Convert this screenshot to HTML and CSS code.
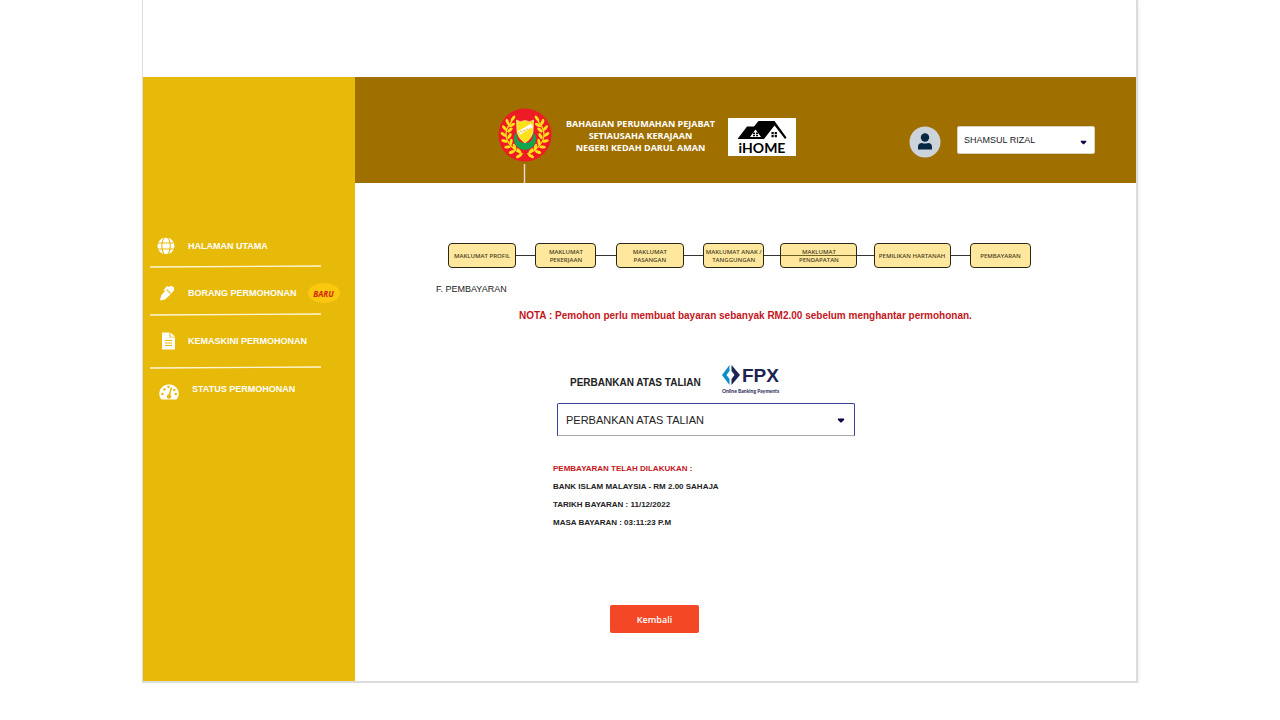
FILE: index.html
```html
<!DOCTYPE html>
<html lang="ms">
<head>
<meta charset="utf-8">
<meta name="viewport" content="width=device-width, initial-scale=1">
<title>iHOME - Pembayaran</title>
<link rel="stylesheet" href="styles.css">
</head>
<body>
<div class="page">
  <aside class="sidebar">
    <nav class="menu">
      <a class="menu-item" href="#">
        <svg class="menu-icon" viewBox="0 0 22 22" aria-hidden="true"><circle cx="11" cy="11" r="8.500" fill="#fff"/><g fill="none" stroke="#e7b909" stroke-width="1.100"><ellipse cx="11" cy="11" rx="4.200" ry="9"/><path d="M2 8h18M2 14h18"/></g></svg>
        <span>HALAMAN UTAMA</span>
      </a>
      <svg class="rule rule-first" viewBox="0 0 171 5" preserveAspectRatio="none" aria-hidden="true"><path d="M0 3L171 2"/></svg>
      <a class="menu-item" href="#">
        <svg class="menu-icon" viewBox="0 0 22 22" aria-hidden="true"><g fill="#fff"><path d="M5 18.500L6.300 13L11.500 7.500L16 12L10 17.400Z"/><path d="M8.500 8L11.500 4.500Q13 4 14 5L15.500 4Q17.500 3.500 19 5.500Q19.500 7.500 18.500 9L16.500 11.500L12.200 7.200L10 9Z"/></g><path d="M11.500 8L15.500 12" stroke="#e7b909" stroke-width=".8"/></svg>
        <span>BORANG PERMOHONAN</span>
        <em class="badge">BARU</em>
      </a>
      <svg class="rule" viewBox="0 0 171 5" preserveAspectRatio="none" aria-hidden="true"><path d="M0 3L171 2"/></svg>
      <a class="menu-item" href="#">
        <svg class="menu-icon" viewBox="0 0 22 22" aria-hidden="true"><path d="M7 2.500H14.500V7.500H20V19.500H7ZM15.500 2.500L20 6.700H15.500Z" fill="#fff"/><path d="M10 10.500H17M10 13H17M10 15.500H17" stroke="#e7b909"/></svg>
        <span>KEMASKINI PERMOHONAN</span>
      </a>
      <svg class="rule rule-last" viewBox="0 0 171 5" preserveAspectRatio="none" aria-hidden="true"><path d="M0 3L171 2"/></svg>
      <a class="menu-item menu-item-status" href="#">
        <svg class="menu-icon" viewBox="0 0 22 22" aria-hidden="true"><path d="M3.500 21.500Q1.200 19 1.200 15.500A9.800 9.300 0 0 1 20.800 15.500Q20.800 19 18.500 21.500Z" fill="#fff"/><g fill="#e7b909"><circle cx="4.400" cy="16" r="1.200"/><circle cx="6.500" cy="11.500" r="1.200"/><circle cx="10.500" cy="8.800" r="1.200"/><circle cx="16.300" cy="12" r="1.200"/><circle cx="17.800" cy="16" r="1.200"/><circle cx="11" cy="18.500" r="2.200"/></g><path d="M11 18L13.500 9.500" stroke="#e7b909" stroke-width="1.500"/></svg>
        <span>STATUS PERMOHONAN</span>
      </a>
    </nav>
  </aside>

  <header class="header">
    <svg class="emblem" viewBox="0 0 54 75" role="img" aria-label="Lambang Negeri Kedah">
      <circle cx="27" cy="27" r="26.500" fill="#ed1c24"/>
      <g id="wreath-left" fill="#ffe11a">
        <path d="M14 13Q2 27 14 39Q18 44 25 46" fill="none" stroke="#ffe11a" stroke-width="1.200"/>
        <ellipse cx="15" cy="10.500" rx="3.300" ry="1.500" transform="rotate(-55 15 10.500)"/>
        <ellipse cx="9.500" cy="14" rx="3.300" ry="1.500" transform="rotate(70 9.500 14)"/>
        <ellipse cx="14" cy="17" rx="3.300" ry="1.500" transform="rotate(-30 14 17)"/>
        <ellipse cx="6.500" cy="20" rx="3.300" ry="1.500" transform="rotate(50 6.500 20)"/>
        <ellipse cx="12" cy="22" rx="3.300" ry="1.500" transform="rotate(-40 12 22)"/>
        <ellipse cx="5.500" cy="26.500" rx="3.300" ry="1.500" transform="rotate(35 5.500 26.500)"/>
        <ellipse cx="11.500" cy="28" rx="3.300" ry="1.500" transform="rotate(-60 11.500 28)"/>
        <ellipse cx="6.500" cy="33" rx="3.300" ry="1.500" transform="rotate(15 6.500 33)"/>
        <ellipse cx="13" cy="34" rx="3.300" ry="1.500" transform="rotate(-80 13 34)"/>
        <ellipse cx="9.500" cy="39" rx="3.300" ry="1.500" transform="rotate(-5 9.500 39)"/>
        <ellipse cx="16.500" cy="39" rx="3.300" ry="1.500" transform="rotate(75 16.500 39)"/>
        <ellipse cx="14" cy="44" rx="3.300" ry="1.500" transform="rotate(-20 14 44)"/>
        <ellipse cx="21" cy="43" rx="3.300" ry="1.500" transform="rotate(50 21 43)"/>
        <ellipse cx="21" cy="48" rx="3.300" ry="1.500" transform="rotate(-30 21 48)"/>
      </g>
      <use href="#wreath-left" transform="translate(54 0) scale(-1 1)"/>
      <path d="M18.500 24A11 11 0 1 0 35.500 24L34.500 31A8 6 0 0 1 19.500 31Z" fill="#12a650"/>
      <path d="M18.500 12Q22 15 27 12.500Q32 15 35.500 12L35 24Q34 30.500 27 35Q20 30.500 19 24Z" fill="#ffe11a" stroke="#fff8bd" stroke-width=".6"/>
      <path d="M21 25L34 17.500" stroke="#fff" stroke-width="4"/>
      <path d="M21 25.500l2-3 1 2 2-3 1 2 2-3 1 2 3-3" fill="none" stroke="#e0bf20" stroke-width=".7"/>
      <path d="M26.500 56V75" stroke="#e8e0cf" stroke-width="1.400"/>
    </svg>
    <p class="agency">BAHAGIAN PERUMAHAN PEJABAT<br>SETIAUSAHA KERAJAAN<br>NEGERI KEDAH DARUL AMAN</p>
    <svg class="ihome" viewBox="0 0 68 38" role="img" aria-label="iHOME">
      <path d="M0 0H68V38H0Z" fill="#fff"/>
      <path d="M9.500 21L19 8.500H26L30.500 3H46.500L58.500 19.500L57 21L46.500 7.500L36 21Z" fill="#000"/>
      <path d="M37 21L46.500 8.500L55.500 20V21Z" fill="#fff"/>
      <path d="M22 19L27.500 11.500L33 19Z" fill="#fff"/>
      <path d="M25 14.500h2v1.500h-2zM28 14.500h2v1.500h-2zM25 16.700h2v1.500h-2zM28 16.700h2v1.500h-2zM43.500 14h2.200v2.200h-2.200zM46.700 14h2.200v2.200h-2.200zM43.500 17h2.200v2.200h-2.200zM46.700 17h2.200v2.200h-2.200z" fill="#000"/>
      <text x="34" y="34.500" text-anchor="middle" class="ihome-name">iHOME</text>
    </svg>
    <div class="account">
      <svg class="avatar" viewBox="0 0 32 32" aria-hidden="true"><circle cx="16" cy="16" r="15.500" fill="#cdd3da"/><circle cx="16" cy="11.500" r="4.200" fill="#062743"/><path d="M9 23.500V21Q9 17 13 17Q16 18 19 17Q23 17 23 21V23.500Z" fill="#062743"/></svg>
      <div class="picker">
        <select class="user-select" aria-label="Pengguna"><option>SHAMSUL RIZAL</option></select>
        <svg class="caret" viewBox="0 0 8 5" aria-hidden="true"><path d="M1 .5H7Q7.500 1.500 7 2L4.500 4.500H3.500L1 2Q.5 1.500 1 .5Z"/></svg>
      </div>
    </div>
  </header>

  <main class="content">
    <ol class="steps">
      <li class="step medium">MAKLUMAT PROFIL</li>
      <li class="link" aria-hidden="true"></li>
      <li class="step">MAKLUMAT<br>PEKERJAAN</li>
      <li class="link" aria-hidden="true"></li>
      <li class="step medium">MAKLUMAT<br>PASANGAN</li>
      <li class="link" aria-hidden="true"></li>
      <li class="step">MAKLUMAT ANAK /<br>TANGGUNGAN</li>
      <li class="link short" aria-hidden="true"></li>
      <li class="step wide crossed">MAKLUMAT<br>PENDAPATAN</li>
      <li class="link short" aria-hidden="true"></li>
      <li class="step wide">PEMILIKAN HARTANAH</li>
      <li class="link" aria-hidden="true"></li>
      <li class="step">PEMBAYARAN</li>
    </ol>
    <h1 class="title">F. PEMBAYARAN</h1>
    <p class="note">NOTA : Pemohon perlu membuat bayaran sebanyak RM2.00 sebelum menghantar permohonan.</p>

    <form class="payment">
      <div class="method">
        <label for="method">PERBANKAN ATAS TALIAN</label>
        <svg class="fpx" viewBox="0 0 60 32" role="img" aria-label="FPX Online Banking Payments">
          <path d="M8.500 1V7L5.500 11L8.500 15V21L1 11Z" fill="#0b8fcb"/>
          <path d="M10.500 1L19 11L10.500 21V15L13.500 11L10.500 7Z" fill="#1d2454"/>
          <text x="21" y="18" class="fpx-name">FPX</text>
          <text x="1" y="29" class="fpx-tag">Online Banking Payments</text>
        </svg>
      </div>
      <div class="picker">
        <select class="method-select" id="method"><option>PERBANKAN ATAS TALIAN</option></select>
        <svg class="caret caret-method" viewBox="0 0 8 5" aria-hidden="true"><path d="M1 .5H7Q7.500 1.500 7 2L4.500 4.500H3.500L1 2Q.5 1.500 1 .5Z"/></svg>
      </div>
      <div class="receipt">
        <p class="paid">PEMBAYARAN TELAH DILAKUKAN :</p>
        <p>BANK ISLAM MALAYSIA - RM 2.00 SAHAJA</p>
        <p>TARIKH BAYARAN : 11/12/2022</p>
        <p>MASA BAYARAN : 03:11:23 P.M</p>
      </div>
      <button class="back" type="button">Kembali</button>
    </form>
  </main>
</div>
</body>
</html>
```
FILE: styles.css
```css
* { box-sizing: border-box; }

body {
  margin: 0;
  background: #fff;
  color: #222;
  font-family: "Liberation Sans", Arial, sans-serif;
}

p, h1, ol { margin: 0; padding: 0; }

.page {
  display: grid;
  grid-template-columns: 212px 1fr;
  grid-template-rows: auto 1fr;
  margin: 0 142px;
  padding-top: 77px;
  border: 2px solid #dcdcdc;
  border-top: 0;
  border-left-width: 1px;
  box-shadow: 1px 1px 2px #eee;
}

/* Sidebar */
.sidebar {
  grid-row: 1 / 3;
  padding: 157px 7px 0;
  background: #e7b909;
}

.menu { display: flex; flex-direction: column; }

.menu-item {
  display: flex;
  align-items: center;
  height: 24px;
  padding-left: 5px;
  gap: 11px;
  color: #fff;
  font-size: 9px;
  font-weight: bold;
  text-decoration: none;
  white-space: nowrap;
}

.menu-item-status { padding-left: 8px; gap: 12px; }

.menu-icon { flex: none; width: 22px; height: 22px; }

.rule { width: 171px; height: 5px; margin: 7px 0 12px; }
.rule-first { margin-top: 6px; }
.rule-last { margin: 12px 0 7px; }
.rule path { stroke: #fff6d8; stroke-width: 1.4; }

.badge {
  display: grid;
  place-items: center;
  width: 32px;
  height: 20px;
  border-radius: 50%;
  background: #fbc70f;
  color: #d1260c;
  font: italic bold 8px "Liberation Sans Narrow", "Open Sans", sans-serif;
}

/* Header */
.header {
  display: flex;
  align-items: flex-start;
  gap: 16px;
  padding: 31px 41px 0 143px;
  background: #9f6f00;
}

.emblem { flex: none; width: 54px; height: 75px; }

.agency {
  margin: 10px -3px 0 -2px;
  color: #fff;
  font: bold 9px/12px "Open Sans", sans-serif;
  text-align: center;
  white-space: nowrap;
}

.ihome { flex: none; width: 68px; height: 38px; margin-top: 10px; }
.ihome-name { font: bold 14px Lato, sans-serif; fill: #000; }

.account { display: flex; gap: 16px; margin: 18px 0 0 auto; }
.avatar { width: 32px; height: 32px; }

.picker { position: relative; }

.user-select,
.method-select {
  display: block;
  appearance: none;
  margin: 0;
  background: #fff;
  color: #222;
  font-family: inherit;
}

.user-select {
  width: 138px;
  height: 28px;
  padding: 0 6px;
  border: 1px solid #d9d2c0;
  border-radius: 2px;
  font-size: 9px;
}

.caret {
  position: absolute;
  top: 50%;
  right: 8px;
  width: 7px;
  height: 5px;
  margin-top: -2px;
  fill: #0b0645;
  pointer-events: none;
}

.caret-method { right: 10px; width: 8px; }

/* Content */
.content { padding: 60px 105px 48px 81px; }

.steps {
  display: flex;
  align-items: center;
  padding-left: 12px;
  list-style: none;
}

.step {
  position: relative;
  display: flex;
  flex: none;
  align-items: center;
  justify-content: center;
  width: 61px;
  height: 25px;
  border: 1px solid #2b2718;
  border-radius: 4px;
  background: #ffe89e;
  color: #4b4226;
  font: 600 6px/8px "Open Sans", sans-serif;
  text-align: center;
  white-space: nowrap;
}

.medium { width: 68px; }
.wide { width: 77px; }

.crossed::after {
  content: "";
  position: absolute;
  inset: 11px 0 auto;
  height: 1px;
  background: #6d5f24;
}

.link { flex: 6; height: 1px; background: #333; }
.short { flex: 5; }

.title {
  margin-top: 15px;
  font-size: 9px;
  font-weight: normal;
  line-height: 12px;
}

.note {
  margin: 15px 0 0 83px;
  color: #c4161c;
  font-size: 10px;
  font-weight: bold;
  line-height: 12px;
}

.payment { width: 298px; margin: 42px 0 0 121px; }

.method {
  display: flex;
  gap: 20px;
  margin-bottom: 2px;
  padding-left: 13px;
  font-size: 10px;
  font-weight: bold;
  line-height: 37px;
  white-space: nowrap;
}

.method svg { width: 60px; height: 32px; }
.fpx-name { font: bold 19px "Liberation Sans", sans-serif; fill: #1d2454; }
.fpx-tag { font: bold 5px Lato, sans-serif; fill: #1d2454; }

.method-select {
  width: 100%;
  height: 33px;
  padding: 0 8px;
  border: 1px solid #3b3f9c;
  border-bottom-color: #aaa;
  border-radius: 2px 2px 0 0;
  font-size: 11px;
}

.receipt {
  margin: 24px 0 0 -4px;
  font-size: 8px;
  font-weight: bold;
  line-height: 18px;
}

.paid { color: #c4161c; }

.back {
  display: block;
  width: 89px;
  height: 28px;
  margin: 73px 0 0 53px;
  border: 0;
  border-radius: 2px;
  background: #f34726;
  color: #fff;
  font: 600 9px "Open Sans", sans-serif;
}
```
